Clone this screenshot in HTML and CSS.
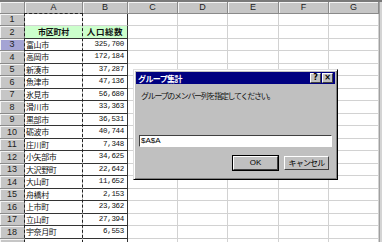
FILE: index.html
```html
<!DOCTYPE html>
<html lang="ja">
<head>
    <meta charset="UTF-8">
    <title>グループ集計</title>
    <link rel="stylesheet" href="styles.css">
</head>
<body>

<div id="sheet">
    <div id="grid"></div>
    <div class="ants"></div>

    <div class="dialog">
        <div class="titlebar">
            <span class="title">グループ集計</span>
            <span class="tbtn">?</span>
            <span class="tbtn">×</span>
        </div>
        <div class="dlg-body">
            <p class="prompt">グループのメンバー列を指定してください。</p>
            <div class="field">$A$A</div>
            <div class="btn-row">
                <span class="btn btn-default">OK</span>
                <span class="btn">キャンセル</span>
            </div>
        </div>
    </div>
</div>

<script>
    // 市区町村と人口
    const rows = [
        ["富山市", "325,700"], ["高岡市", "172,184"], ["新湊市", "37,287"],
        ["魚津市", "47,136"], ["氷見市", "56,680"], ["滑川市", "33,363"],
        ["黒部市", "36,531"], ["砺波市", "40,744"], ["庄川町", "7,348"],
        ["小矢部市", "34,625"], ["大沢野町", "22,642"], ["大山町", "11,652"],
        ["舟橋村", "2,153"], ["上市町", "23,362"], ["立山町", "27,394"],
        ["宇奈月町", "6,553"]
    ];
    const cols = ["A", "B", "C", "D", "E", "F", "G"];
    const grid = document.getElementById("grid");
    let html = '<div class="corner"></div>';
    cols.forEach(c => { html += `<div class="colhead">${c}</div>`; });
    html += '<div class="edge"></div>';

    for (let r = 1; r <= 19; r++) {
        // 19行目は画面下端で切れているので番号は出さない
        const label = r < 19 ? r : "";
        html += `<div class="rowhead${r === 3 ? ' active' : ''}">${label}</div>`;
        if (r === 2) {
            html += '<div class="cell a head">市区町村</div><div class="cell b head">人口総数</div>';
        } else if (r >= 3 && r <= 18) {
            const d = rows[r - 3];
            html += `<div class="cell a tbl">${d[0]}</div><div class="cell b tbl num">${d[1]}</div>`;
        } else {
            html += '<div class="cell a"></div><div class="cell b"></div>';
        }
        for (let i = 2; i < cols.length; i++) html += '<div class="cell"></div>';
        html += '<div class="edge"></div>';
    }
    grid.innerHTML = html;
</script>

</body>
</html>
```

FILE: styles.css
```css
body {
    margin: 0;
    background: #fff;
    font-family: "Noto Sans CJK JP", "DejaVu Sans", sans-serif;
}

#sheet {
    position: relative;
    width: 382px;
    height: 242px;
    overflow: hidden;
    border-top: 2px solid #7a7a7a;
    box-sizing: border-box;
}

#grid {
    display: grid;
    grid-template-columns: 25px 58px 45px 50px 50px 51px 50px 50px 3px;
    grid-template-rows: 11.5px repeat(19, 12.5px);
}

.corner, .colhead, .rowhead {
    background: #c6c6c6;
    border-right: 1px solid #8a8a8a;
    border-bottom: 1px solid #8a8a8a;
    box-shadow: inset 1px 1px 0 #f4f4f4;
    box-sizing: border-box;
    font-family: "Liberation Sans", Arial, sans-serif;
    color: #222;
    display: flex;
    align-items: center;
    justify-content: center;
}
.colhead {
    font-size: 9px;
}
.rowhead {
    font-size: 9px;
}
.rowhead.active {
    background: #a4a4d4;
}

.edge {
    background: #d4d4d4;
    border-left: 1px solid #a0a0a0;
}

.cell {
    border-right: 1px solid #d2d2d2;
    border-bottom: 1px solid #d2d2d2;
    box-sizing: border-box;
    font-size: 8px;
    line-height: 11px;
    white-space: nowrap;
    overflow: visible;
    color: #111;
}
.cell.b {
    border-right: 1px solid #333;
}
.cell.tbl, .cell.head {
    border-bottom: 1px solid #333;
}
.cell.a.tbl {
    padding-left: 1px;
    letter-spacing: -0.4px;
}
.cell.head {
    background: #ccffcc;
    font-weight: bold;
    text-align: center;
    letter-spacing: -0.3px;
}
.cell.b.head {
    font-size: 8.5px;
    letter-spacing: 0.6px;
}
.cell.num {
    text-align: right;
    padding-right: 3px;
    font-family: "Liberation Mono", monospace;
    font-size: 7.5px;
    letter-spacing: -0.3px;
}

/* 選択範囲の点線 */
.ants {
    position: absolute;
    left: 24px;
    top: 11px;
    width: 59px;
    height: 240px;
    border: 1.5px dashed #222;
    box-sizing: border-box;
}

.dialog {
    position: absolute;
    left: 133px;
    top: 67px;
    width: 205px;
    height: 111px;
    background: #c0c0c0;
    border: 1px solid;
    border-color: #dfdfdf #000 #000 #dfdfdf;
    box-shadow: inset 1px 1px 0 #fff, inset -1px -1px 0 #808080;
    padding: 2px;
    box-sizing: border-box;
    font-size: 8px;
}

.titlebar {
    display: flex;
    align-items: center;
    gap: 1px;
    height: 12px;
    background: #000080;
    padding: 0 2px;
}
.title {
    flex: 1;
    color: #fff;
    font-size: 8px;
    font-weight: bold;
    letter-spacing: -0.6px;
}
.tbtn {
    width: 9px;
    height: 8px;
    background: #c0c0c0;
    border: 1px solid;
    border-color: #fff #404040 #404040 #fff;
    font-family: "DejaVu Sans", sans-serif;
    font-size: 8px;
    font-weight: bold;
    line-height: 8px;
    text-align: center;
    color: #000;
}

.dlg-body {
    padding: 0 3px;
}
.prompt {
    margin: 6px 0 0 2px;
    font-size: 8px;
    letter-spacing: -1.3px;
    color: #111;
}
.field {
    margin-top: 34px;
    height: 12px;
    background: #fff;
    border-top: 1px solid #404040;
    border-left: 1px solid #404040;
    border-bottom: 1px solid #fff;
    border-right: 1px solid #fff;
    box-sizing: border-box;
    font-family: "Liberation Sans", sans-serif;
    font-size: 8px;
    line-height: 10px;
    padding-left: 1px;
}
.btn-row {
    display: flex;
    justify-content: flex-end;
    gap: 6px;
    margin-top: 9px;
    padding-right: 3px;
}
.btn {
    width: 45px;
    height: 14px;
    background: #c0c0c0;
    border: 1px solid;
    border-color: #fff #404040 #404040 #fff;
    box-sizing: border-box;
    font-size: 8px;
    line-height: 12px;
    text-align: center;
    letter-spacing: -0.8px;
}
.btn-default {
    outline: 1px solid #000;
    font-family: "Liberation Sans", sans-serif;
    letter-spacing: 0;
}
```
